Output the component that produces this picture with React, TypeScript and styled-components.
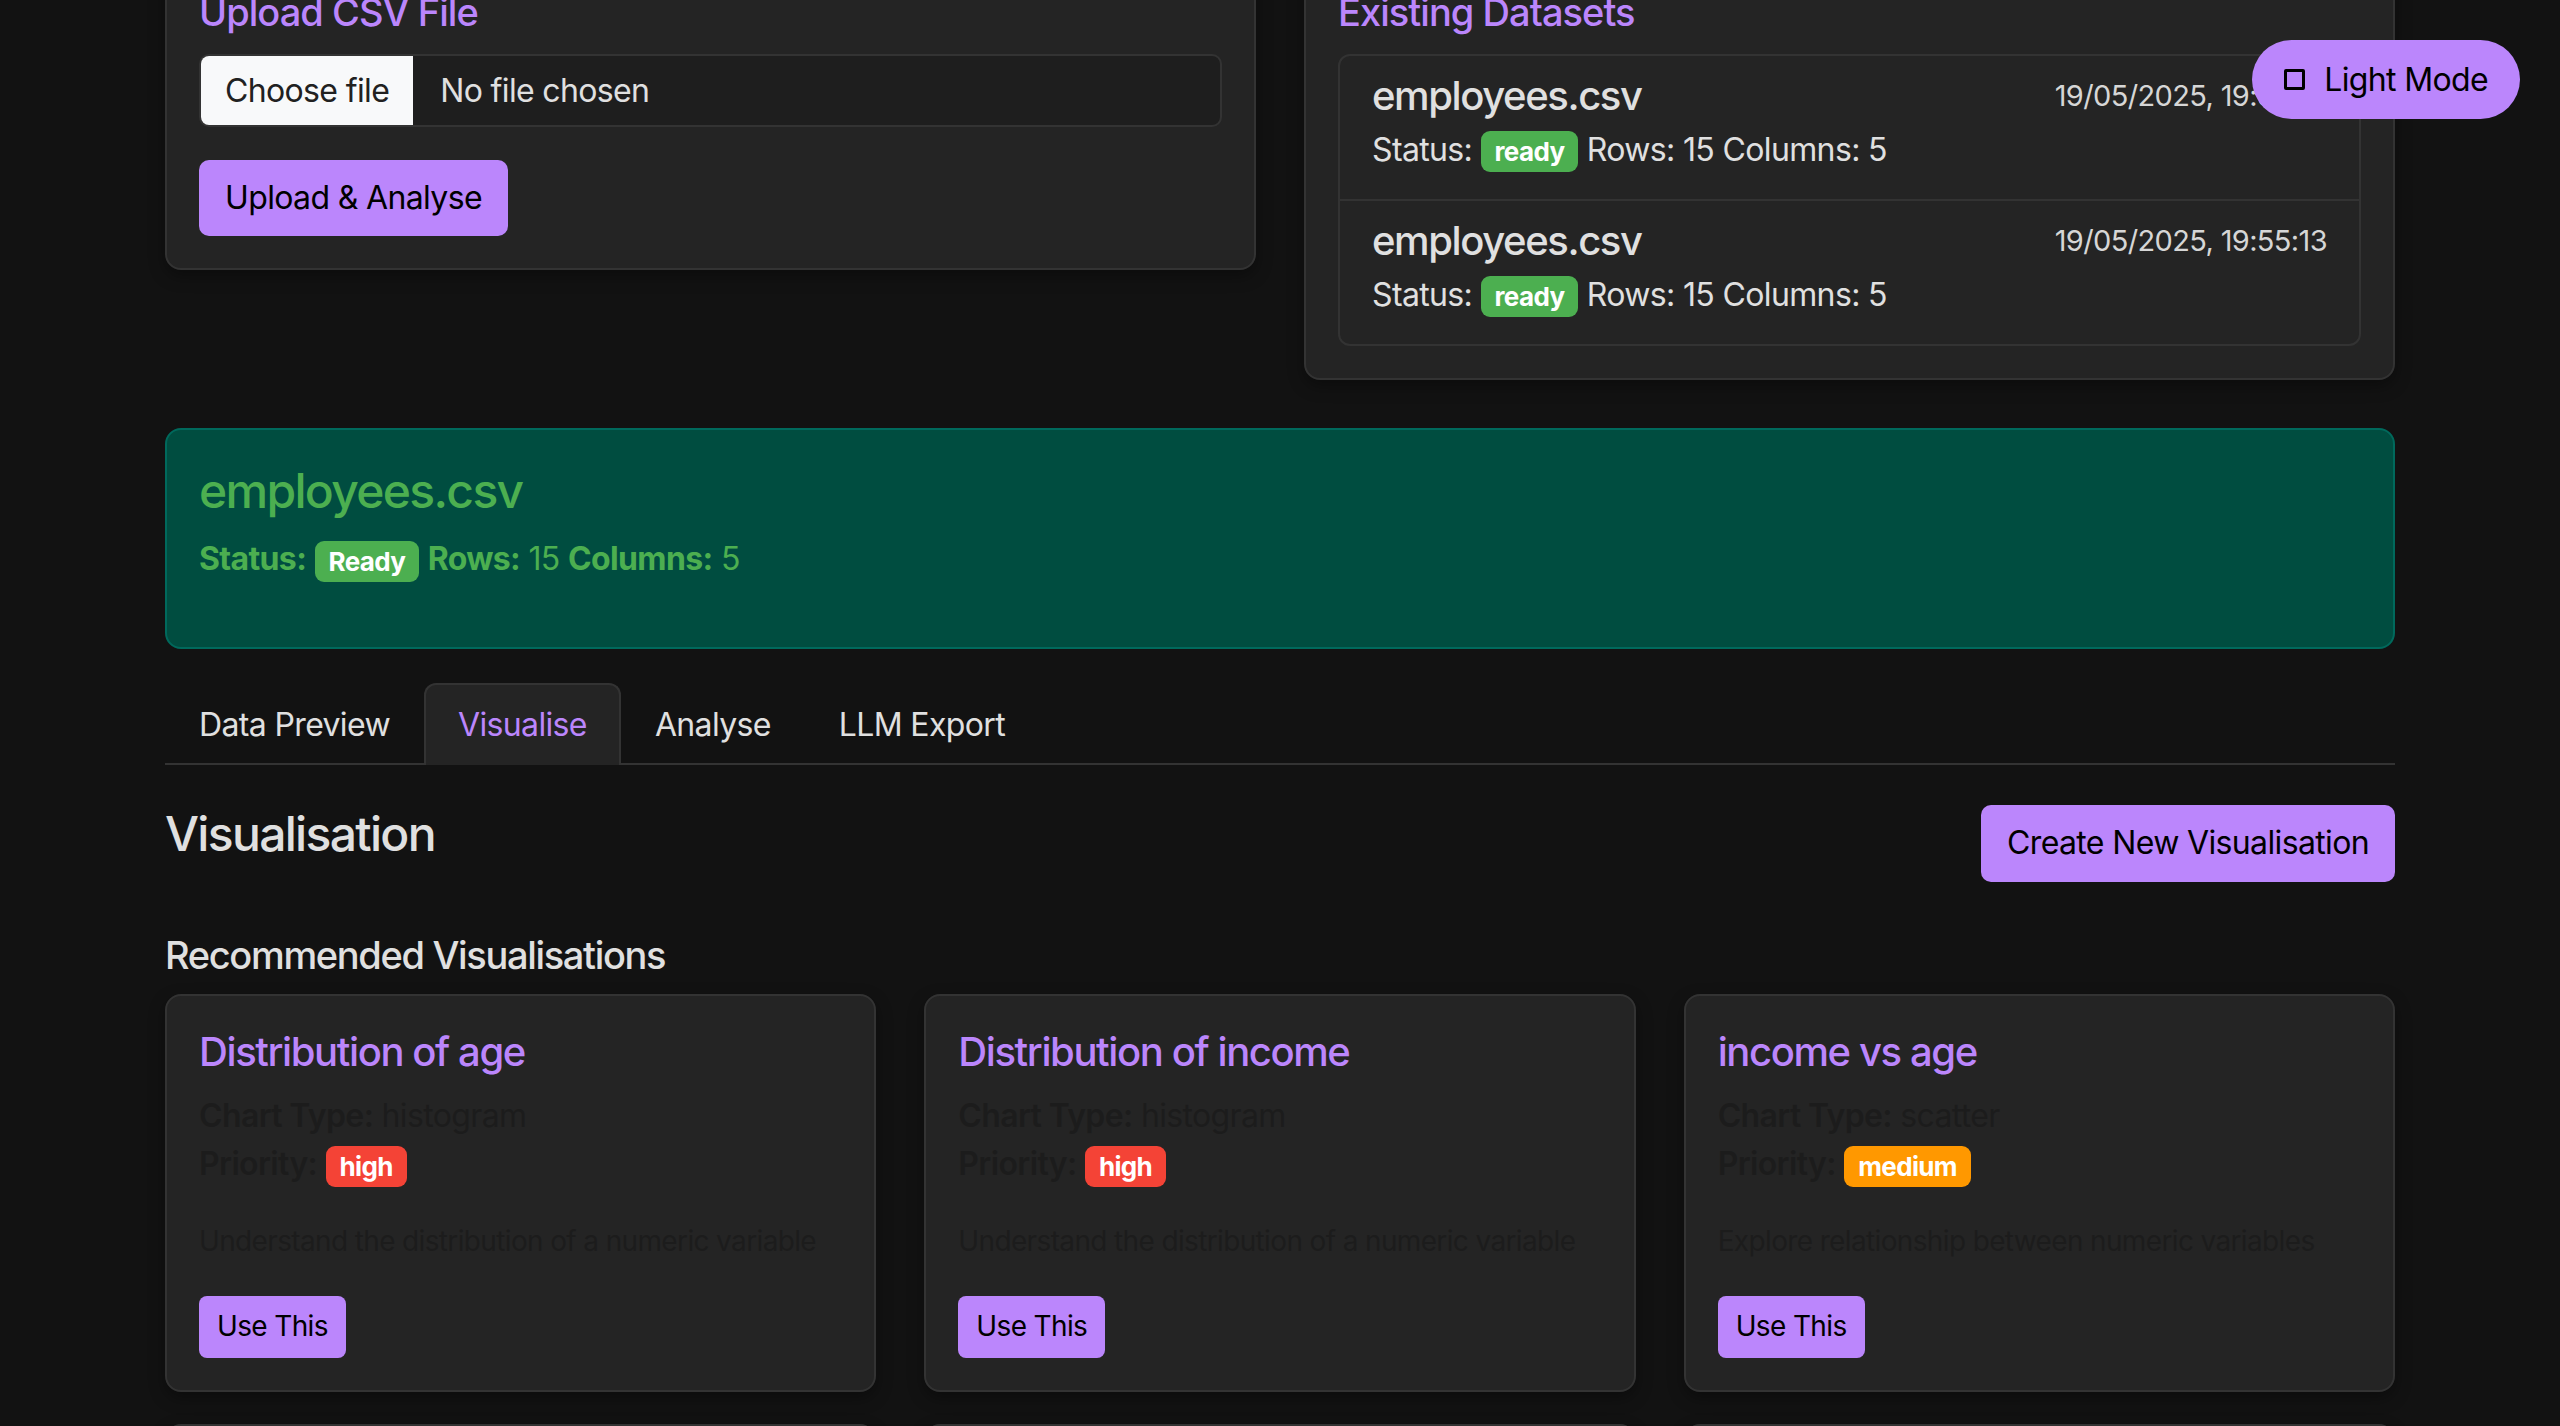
import React, { useState } from 'react';
import styled, { createGlobalStyle, css } from 'styled-components';

const GlobalStyle = createGlobalStyle`
  html, body {
    margin: 0;
    padding: 0;
    background: #121212;
  }
  body {
    color: #e0e0e0;
    font-family: Inter, "Noto Sans", sans-serif;
    font-size: 32px;
    letter-spacing: -0.02em;
  }
  * { box-sizing: border-box; }
`;

const PURPLE = '#bb86fc';

// big display text in the original runs a bit tighter than Inter does
const tight = css`
  font-weight: 500;
  line-height: 1.2;
  letter-spacing: -0.035em;
`;

// the screenshot is taken scrolled down a little, so the top cards are cut
const Page = styled.main`
  max-width: 2230px;
  margin: -44px auto 0;
  padding-bottom: 48px;
`;

const TopGrid = styled.div`
  display: grid;
  grid-template-columns: 1fr 1fr;
  gap: 48px;
  align-items: start;
`;

const Card = styled.section`
  background: #242424;
  border: 2px solid #333;
  border-radius: 16px;
  padding: 32px;
  box-shadow: 0 6px 16px rgba(0, 0, 0, 0.35);
`;

const CardTitle = styled.h3`
  ${tight};
  letter-spacing: -0.025em;
  margin: 0 0 18px;
  color: ${PURPLE};
  font-size: 38px;
`;

const FileBox = styled.label`
  display: flex;
  height: 73px;
  border: 2px solid #333;
  border-radius: 10px;
  background: #1e1e1e;
  overflow: hidden;
`;

const ChooseButton = styled.span`
  display: flex;
  align-items: center;
  padding: 0 24px;
  background: #f8f9fa;
  color: #212121;
`;

const FileName = styled.span`
  display: flex;
  align-items: center;
  padding-left: 27px;
  color: #e0e0e0;
`;

const Button = styled.button<{ $small?: boolean }>`
  border: none;
  background: ${PURPLE};
  color: #000;
  font-family: inherit;
  letter-spacing: inherit;
  cursor: pointer;
  line-height: 1.2;
  ${p => p.$small ? css`
    font-size: 28px;
    padding: 14px 18px;
    border-radius: 8px;
  ` : css`
    font-size: 32px;
    padding: 19px 26px;
    border-radius: 10px;
  `}
`;

const UploadButton = styled(Button)`
  margin-top: 33px;
`;

const DatasetList = styled.div`
  border: 2px solid #333;
  border-radius: 12px;
`;

const DatasetItem = styled.div`
  padding: 16px 32px 25px;
  border-bottom: 2px solid #333;
  &:last-child { border-bottom: none; }
`;

const ItemHead = styled.div`
  display: flex;
  justify-content: space-between;
  align-items: center;
  margin-bottom: 6px;
`;

const ItemName = styled.span`
  ${tight};
  font-size: 40px;
`;

const ItemDate = styled.span`
  font-size: 29px;
  color: #d6d6d6;
`;

const StatusLine = styled.div`
  line-height: 1.5;
`;

const badgeColors = {
  green: '#4caf50',
  red: '#f44336',
  orange: '#ff9800',
};

const Badge = styled.span<{ $tone: keyof typeof badgeColors }>`
  display: inline-block;
  padding: 5px 14px;
  border-radius: 9px;
  background: ${p => badgeColors[p.$tone]};
  color: #fff;
  font-size: 26px;
  font-weight: 700;
  line-height: 1.2;
  vertical-align: middle;
`;

const SelectedPanel = styled.section`
  margin-top: 48px;
  padding: 32px;
  background: #004d40;
  border: 2px solid #00695c;
  border-radius: 16px;
  color: #4caf50;
`;

const PanelTitle = styled.h2`
  ${tight};
  margin: 0 0 16px;
  font-size: 48px;
`;

const PanelStatus = styled.p`
  margin: 0 0 32px;
  line-height: 1.5;
  strong { font-weight: 700; }
`;

const TabBar = styled.nav`
  display: flex;
  margin-top: 34px;
  border-bottom: 2px solid #333;
`;

const Tab = styled.button<{ $active?: boolean }>`
  padding: 16px 32px;
  margin-bottom: -2px;
  border: 2px solid transparent;
  border-bottom: none;
  border-radius: 12px 12px 0 0;
  background: transparent;
  color: #e0e0e0;
  font-family: inherit;
  font-size: 32px;
  letter-spacing: inherit;
  line-height: 1.5;
  cursor: pointer;
  ${p => p.$active && css`
    background: #242424;
    border-color: #333;
    color: ${PURPLE};
  `}
`;

const SectionHead = styled.div`
  display: flex;
  justify-content: space-between;
  align-items: flex-start;
  margin-top: 40px;
`;

const SectionTitle = styled.h2`
  ${tight};
  margin: 0;
  font-size: 48px;
`;

const SubTitle = styled.h3`
  ${tight};
  margin: 51px 0 16px;
  font-size: 38px;
`;

const RecGrid = styled.div`
  display: grid;
  grid-template-columns: repeat(3, 1fr);
  gap: 32px 48px;
`;

const RecTitle = styled.h3`
  ${tight};
  margin: 0 0 16px;
  color: ${PURPLE};
  font-size: 40px;
`;

const RecMeta = styled.p`
  margin: 0;
  line-height: 1.5;
  color: #1c1c1c;
  strong { font-weight: 600; }
`;

const RecDesc = styled.p`
  margin: 32px 0 34px;
  font-size: 28px;
  line-height: 1.5;
  color: #1c1c1c;
`;

const ThemeToggle = styled.button`
  position: fixed;
  top: 40px;
  right: 40px;
  z-index: 10;
  display: flex;
  align-items: center;
  gap: 19px;
  height: 79px;
  padding: 0 32px;
  border: none;
  border-radius: 40px;
  background: ${PURPLE};
  color: #000;
  font-family: inherit;
  font-size: 32px;
  letter-spacing: inherit;
  cursor: pointer;
`;

const ToggleIcon = styled.span`
  width: 21px;
  height: 21px;
  border: 3px solid #000;
  border-radius: 2px;
`;

type Rec = {
  title: string,
  chart: string,
  priority: 'high' | 'medium',
  desc: string,
};

const recs: Rec[] = [
  { title: 'Distribution of age', chart: 'histogram', priority: 'high', desc: 'Understand the distribution of a numeric variable' },
  { title: 'Distribution of income', chart: 'histogram', priority: 'high', desc: 'Understand the distribution of a numeric variable' },
  { title: 'income vs age', chart: 'scatter', priority: 'medium', desc: 'Explore relationship between numeric variables' },
  { title: 'Count by department', chart: 'bar', priority: 'medium', desc: 'Compare counts across categories' },
  { title: 'Count by city', chart: 'bar', priority: 'medium', desc: 'Compare counts across categories' },
  { title: 'Average income by department', chart: 'bar', priority: 'medium', desc: 'Compare a numeric value across categories' },
];

const datasets = [
  { name: 'employees.csv', date: '19/05/2025, 19:55:13', rows: 15, cols: 5 },
  { name: 'employees.csv', date: '19/05/2025, 19:55:13', rows: 15, cols: 5 },
];

const tabs = ['Data Preview', 'Visualise', 'Analyse', 'LLM Export'];

const App: React.FC = () => {
  const [tab, setTab] = useState('Visualise');

  return (
    <>
      <GlobalStyle />
      <ThemeToggle>
        <ToggleIcon />
        Light Mode
      </ThemeToggle>

      <Page>
        <TopGrid>
          <Card>
            <CardTitle>Upload CSV File</CardTitle>
            <FileBox>
              <ChooseButton>Choose file</ChooseButton>
              <FileName>No file chosen</FileName>
            </FileBox>
            <UploadButton>Upload &amp; Analyse</UploadButton>
          </Card>

          <Card>
            <CardTitle>Existing Datasets</CardTitle>
            <DatasetList>
              {datasets.map((d, i) => (
                <DatasetItem key={i}>
                  <ItemHead>
                    <ItemName>{d.name}</ItemName>
                    <ItemDate>{d.date}</ItemDate>
                  </ItemHead>
                  <StatusLine>
                    Status: <Badge $tone="green">ready</Badge> Rows: {d.rows} Columns: {d.cols}
                  </StatusLine>
                </DatasetItem>
              ))}
            </DatasetList>
          </Card>
        </TopGrid>

        <SelectedPanel>
          <PanelTitle>employees.csv</PanelTitle>
          <PanelStatus>
            <strong>Status:</strong> <Badge $tone="green">Ready</Badge>{' '}
            <strong>Rows:</strong> 15 <strong>Columns:</strong> 5
          </PanelStatus>
        </SelectedPanel>

        <TabBar>
          {tabs.map(t => (
            <Tab key={t} $active={t === tab} onClick={() => setTab(t)}>{t}</Tab>
          ))}
        </TabBar>

        <SectionHead>
          <SectionTitle>Visualisation</SectionTitle>
          <Button>Create New Visualisation</Button>
        </SectionHead>

        <SubTitle>Recommended Visualisations</SubTitle>
        <RecGrid>
          {recs.map(r => (
            <Card key={r.title}>
              <RecTitle>{r.title}</RecTitle>
              <RecMeta><strong>Chart Type:</strong> {r.chart}</RecMeta>
              <RecMeta>
                <strong>Priority:</strong>{' '}
                <Badge $tone={r.priority === 'high' ? 'red' : 'orange'}>{r.priority}</Badge>
              </RecMeta>
              <RecDesc>{r.desc}</RecDesc>
              <Button $small>Use This</Button>
            </Card>
          ))}
        </RecGrid>
      </Page>
    </>
  );
};

export default App;
